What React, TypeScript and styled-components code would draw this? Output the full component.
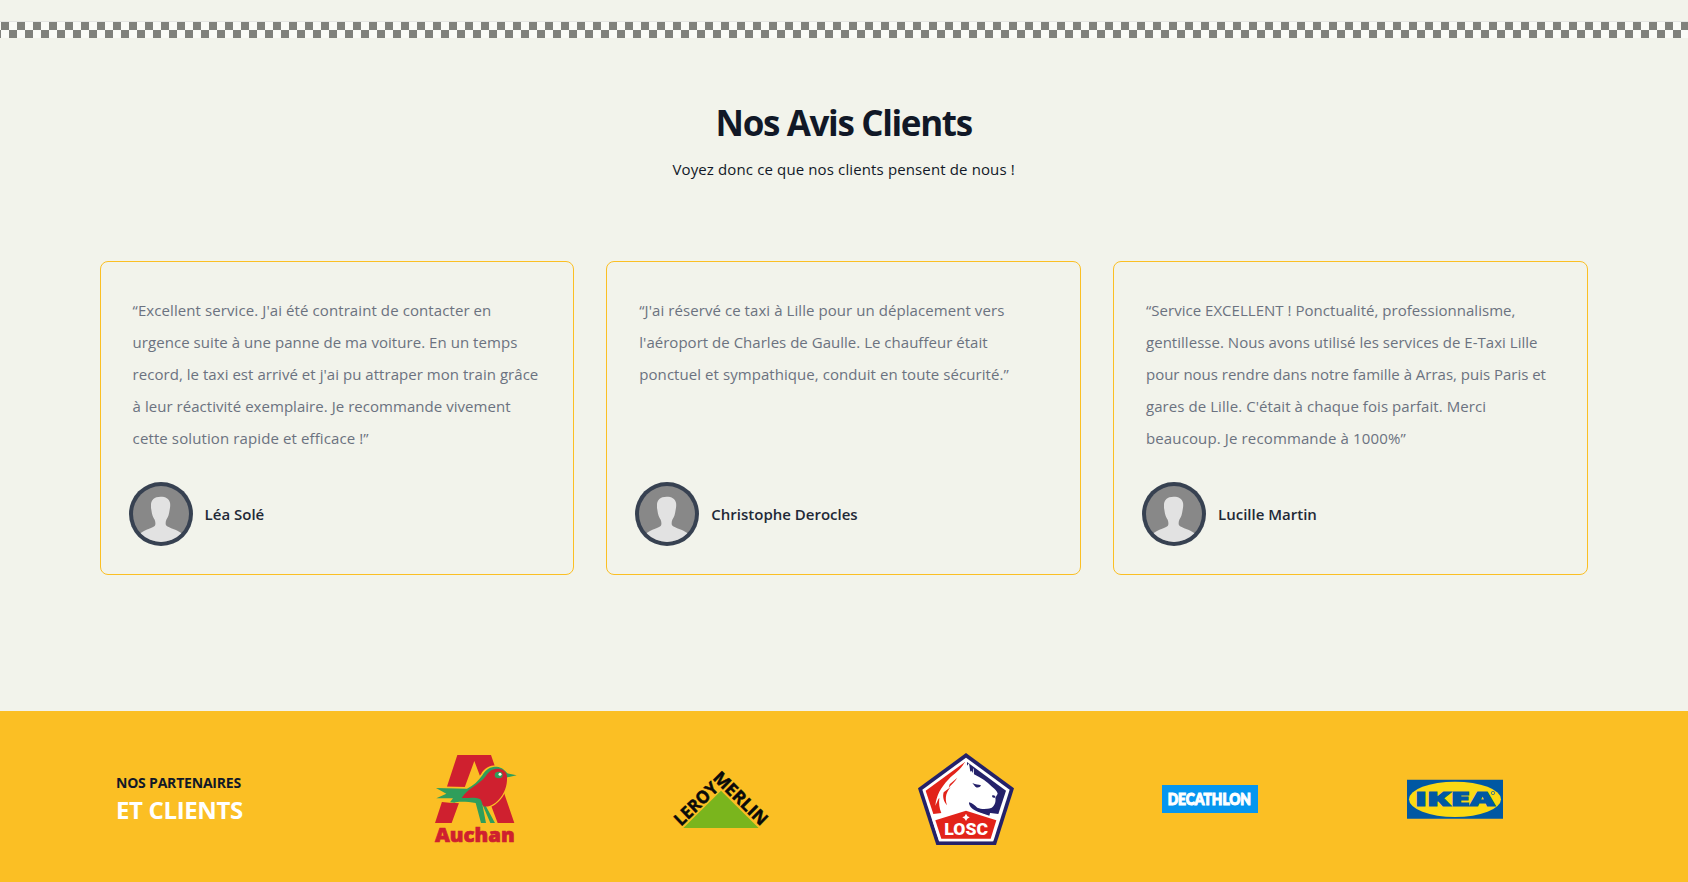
import React from "react";
import styled, { createGlobalStyle } from "styled-components";

const GlobalStyle = createGlobalStyle`
  *, *::before, *::after { box-sizing: border-box; }
  body {
    margin: 0;
    background: #f2f3eb;
    color: #111827;
    font-family: "Open Sans", "Noto Sans", sans-serif;
  }
  h2, p, blockquote { margin: 0; }
`;

const Page = styled.div`
  display: flex;
  flex-direction: column;
  height: 882px;
  overflow: hidden;
`;

const CheckerStrip = styled.div`
  height: 17px;
  margin-top: 21px;
  flex: none;
  border-top: 1px solid #e3e4e2;
  background: repeating-conic-gradient(#fafbf7 0 25%, #80817c 0 50%) 1px 0 / 16px 16px;
`;

const Reviews = styled.section`
  flex: none;
  height: 673px;
  padding: 65px 100.3px 0 99.6px;
`;

const Heading = styled.header`
  display: flex;
  flex-direction: column;
  align-items: center;
  height: 158px;
  white-space: nowrap;
`;

const Title = styled.h2`
  font-size: 35px;
  line-height: 40px;
  font-weight: 700;
  letter-spacing: -1.35px;
`;

const Subtitle = styled.p`
  margin-top: 12px;
  font-size: 15px;
  line-height: 28px;
  letter-spacing: 0.13px;
`;

const CardGrid = styled.div`
  display: grid;
  grid-template-columns: repeat(3, 1fr);
  gap: 32px;
`;

const Card = styled.article`
  display: flex;
  flex-direction: column;
  justify-content: space-between;
  height: 314px;
  padding: 32px;
  border: 1px solid #fbbf24;
  border-radius: 8px;
`;

const Quote = styled.blockquote`
  color: #6b7280;
  font-size: 15px;
  line-height: 32px;
  white-space: nowrap;
`;

const QuoteLine = styled.span<{ $spacing: number }>`
  display: block;
  letter-spacing: ${(p) => p.$spacing}px;
`;

const Author = styled.div`
  display: flex;
  align-items: center;
  gap: 16px;
`;

const Avatar = styled.svg`
  width: 56px;
  height: 56px;
  border-radius: 50%;
  box-shadow: 0 0 0 4px #374151;
  background: #888;
`;

const Name = styled.span`
  font-size: 15px;
  font-weight: 600;
  color: #1f2937;
`;

const Partners = styled.footer`
  display: flex;
  align-items: center;
  flex: none;
  height: 176px;
  padding-left: 116px;
  background: #fbbf24;
`;

const PartnersTitle = styled.h2`
  width: 237.8px;
  padding-top: 2px;
  white-space: nowrap;
  font-size: 14px;
  line-height: 20px;
  font-weight: 700;
  letter-spacing: -0.2px;
`;

const PartnersAccent = styled.span`
  display: block;
  font-size: 24px;
  line-height: 34px;
  font-weight: 700;
  letter-spacing: -0.35px;
  color: #fff;
`;

const LogoRow = styled.div`
  display: grid;
  grid-template-columns: repeat(5, 244.7px);
  justify-items: center;
`;

const Logo = styled.svg`
  display: block;
  width: 96px;
  height: 96px;
  overflow: visible;
`;

const reviews: { name: string; lines: [string, number][] }[] = [
  {
    name: "Léa Solé",
    lines: [
      ["“Excellent service. J'ai été contraint de contacter en", 0.09],
      ["urgence suite à une panne de ma voiture. En un temps", 0.05],
      ["record, le taxi est arrivé et j'ai pu attraper mon train grâce", 0.04],
      ["à leur réactivité exemplaire. Je recommande vivement", 0.04],
      ["cette solution rapide et efficace !”", 0.11],
    ],
  },
  {
    name: "Christophe Derocles",
    lines: [
      ["“J'ai réservé ce taxi à Lille pour un déplacement vers", 0.07],
      ["l'aéroport de Charles de Gaulle. Le chauffeur était", 0.02],
      ["ponctuel et sympathique, conduit en toute sécurité.”", 0.06],
    ],
  },
  {
    name: "Lucille Martin",
    lines: [
      ["“Service EXCELLENT ! Ponctualité, professionnalisme,", 0.03],
      ["gentillesse. Nous avons utilisé les services de E-Taxi Lille", 0.03],
      ["pour nous rendre dans notre famille à Arras, puis Paris et", -0.01],
      ["gares de Lille. C'était à chaque fois parfait. Merci", 0.07],
      ["beaucoup. Je recommande à 1000%”", 0.13],
    ],
  },
];

const Person = () => (
  <Avatar viewBox="0 0 168 168">
    <path
      fill="#e2e2e2"
      d="M83 32C63 32 53 43 54 59C54 64 54 67 55 71C57 87 60 92 65 101C68 110 68 116 65 120C57 127 38 130 22 142V168H146V142C130 130 110 128 99 118C97 113 98 107 100 101C106 92 108 85 110 71C112 62 112 56 111 50C108 37 98 32 83 32Z"
    />
  </Avatar>
);

const Auchan = () => (
  <Logo viewBox="9 18 288 288">
    <path fill="#cf202f" d="M97 30H198L268 234H218L148 48L80 234H30Z" />
    <path
      fill="#fbbf24"
      d="M28 124L124 126C140 118 150 110 168 88C178 68 196 60 216 61C232 62 242 72 249 82L280 91L252 101C249 120 246 134 236 150C226 168 208 184 190 188L216 238H164L148 178L92 174H80L44 170L28 160Z"
    />
    <path
      fill="#2f9e5b"
      d="M33 129L126 131C146 122 160 108 172 91C182 72 196 65 215 65C232 67 240 76 247 85L275 91L247 97L200 170L182 182L210 234H196L172 178L183 234H168L152 174C130 170 100 168 88 173L75 172L84 160L34 160L64 146Z"
    />
    <path
      fill="#cf202f"
      d="M110 159C130 128 160 122 182 94C192 77 204 70 222 71C238 73 247 84 246 98C247 122 238 146 221 164C204 182 188 187 176 184C171 180 172 171 166 163C150 155 130 160 110 159Z"
    />
    <ellipse cx="221" cy="90" rx="12" ry="10" fill="#2f9e5b" />
    <circle cx="225" cy="88" r="4.5" fill="#fff" />
    <text
      x="30"
      y="292"
      textLength="239"
      lengthAdjust="spacingAndGlyphs"
      fontFamily="Open Sans"
      fontWeight="800"
      fontSize="58"
      fill="#cf202f"
      stroke="#cf202f"
      strokeWidth="2"
    >
      Auchan
    </text>
  </Logo>
);

const LeroyMerlin = () => (
  <Logo viewBox="24 -27 288 288">
    <path fill="#7ab51d" d="M168 92L281 204H55Z" />
    <g fontFamily="Open Sans" fontWeight="700" fontSize="52" fill="#0a0a0a" stroke="#0a0a0a" strokeWidth="1.5">
      <text transform="translate(48 200) rotate(-44)" textLength="160" lengthAdjust="spacingAndGlyphs">
        LEROY
      </text>
      <text transform="translate(141 56) rotate(44.5)" textLength="205" lengthAdjust="spacingAndGlyphs">
        MERLIN
      </text>
    </g>
  </Logo>
);

const Losc = () => (
  <Logo viewBox="24 18 288 288">
    <path fill="#24216a" d="M168 24L312 130L258 300H79L24 130Z" />
    <path fill="#fff" d="M168 38L299 134L250 289H87L37 134Z" />
    <path fill="#e2231a" d="M165 51L47 137L70 207L168 195Z" />
    <path fill="#24216a" d="M171 51L288 137L265 207L171 195Z" />
    <path
      fill="#fff"
      d="M164 52C152 76 130 87 116 103C92 128 80 150 76 182C82 170 84 162 88 158C86 175 88 190 94 204L110 213L168 193L230 215L238 192C252 187 259 172 256 158L263 146C262 138 255 133 246 125C230 110 214 98 192 88L191 70L181 80L177 55L168 66Z"
    />
    <path
      fill="#24216a"
      d="M181 72L188 84L190 68ZM187 114C198 119 205 118 213 121C210 128 202 130 196 125ZM256 153L248 150C244 154 247 160 255 158ZM177 172C187 174 193 181 202 188C214 193 226 192 244 190L238 212L205 201C188 194 176 184 177 172Z"
    />
    <path fill="#e2231a" d="M122 126C110 140 103 156 111 181C101 170 97 155 101 142ZM142 98C134 112 124 118 116 128L119 118Z" />
    <path fill="#fff" d="M168 190L268 224L248 289H88L67 224Z" />
    <path fill="#e2231a" d="M168 197L259 226L242 281H94L76 226Z" />
    <path fill="#fff" d="M168 206L172 214L179 217L172 221L168 228L164 221L157 217L164 214Z" />
    <text
      x="103"
      y="270"
      textLength="131"
      lengthAdjust="spacingAndGlyphs"
      fontFamily="Roboto"
      fontWeight="900"
      fontSize="49"
      fill="#fff"
    >
      LOSC
    </text>
  </Logo>
);

const Decathlon = () => (
  <Logo viewBox="36 -57 288 288">
    <path fill="#0596ef" d="M36 45H324V129H36Z" />
    <text
      x="53"
      y="105"
      textLength="250"
      lengthAdjust="spacingAndGlyphs"
      fontFamily="Lato"
      fontWeight="900"
      fontSize="50"
      fill="#fff"
      stroke="#fff"
      strokeWidth="3.5"
    >
      DECATHLON
    </text>
  </Logo>
);

const Ikea = () => (
  <Logo viewBox="36 -42 288 288">
    <path fill="#0058a3" d="M36 44H324V161H36Z" />
    <ellipse cx="180" cy="103" rx="138" ry="53" fill="#fbd914" />
    <text
      x="60"
      y="124"
      textLength="240"
      lengthAdjust="spacingAndGlyphs"
      fontFamily="Open Sans"
      fontWeight="800"
      fontSize="58"
      fill="#0058a3"
      stroke="#0058a3"
      strokeWidth="3"
    >
      IKEA
    </text>
    <circle cx="294" cy="84" r="5" fill="none" stroke="#0058a3" strokeWidth="2" />
  </Logo>
);

export default function App() {
  return (
    <>
      <GlobalStyle />
      <Page>
        <CheckerStrip />
        <Reviews>
          <Heading>
            <Title>Nos Avis Clients</Title>
            <Subtitle>Voyez donc ce que nos clients pensent de nous !</Subtitle>
          </Heading>
          <CardGrid>
            {reviews.map((review) => (
              <Card key={review.name}>
                <Quote>
                  {review.lines.map(([text, spacing]) => (
                    <QuoteLine key={text} $spacing={spacing}>
                      {text}
                    </QuoteLine>
                  ))}
                </Quote>
                <Author>
                  <Person />
                  <Name>{review.name}</Name>
                </Author>
              </Card>
            ))}
          </CardGrid>
        </Reviews>
        <Partners>
          <PartnersTitle>
            NOS PARTENAIRES
            <PartnersAccent>ET CLIENTS</PartnersAccent>
          </PartnersTitle>
          <LogoRow>
            <Auchan />
            <LeroyMerlin />
            <Losc />
            <Decathlon />
            <Ikea />
          </LogoRow>
        </Partners>
      </Page>
    </>
  );
}
